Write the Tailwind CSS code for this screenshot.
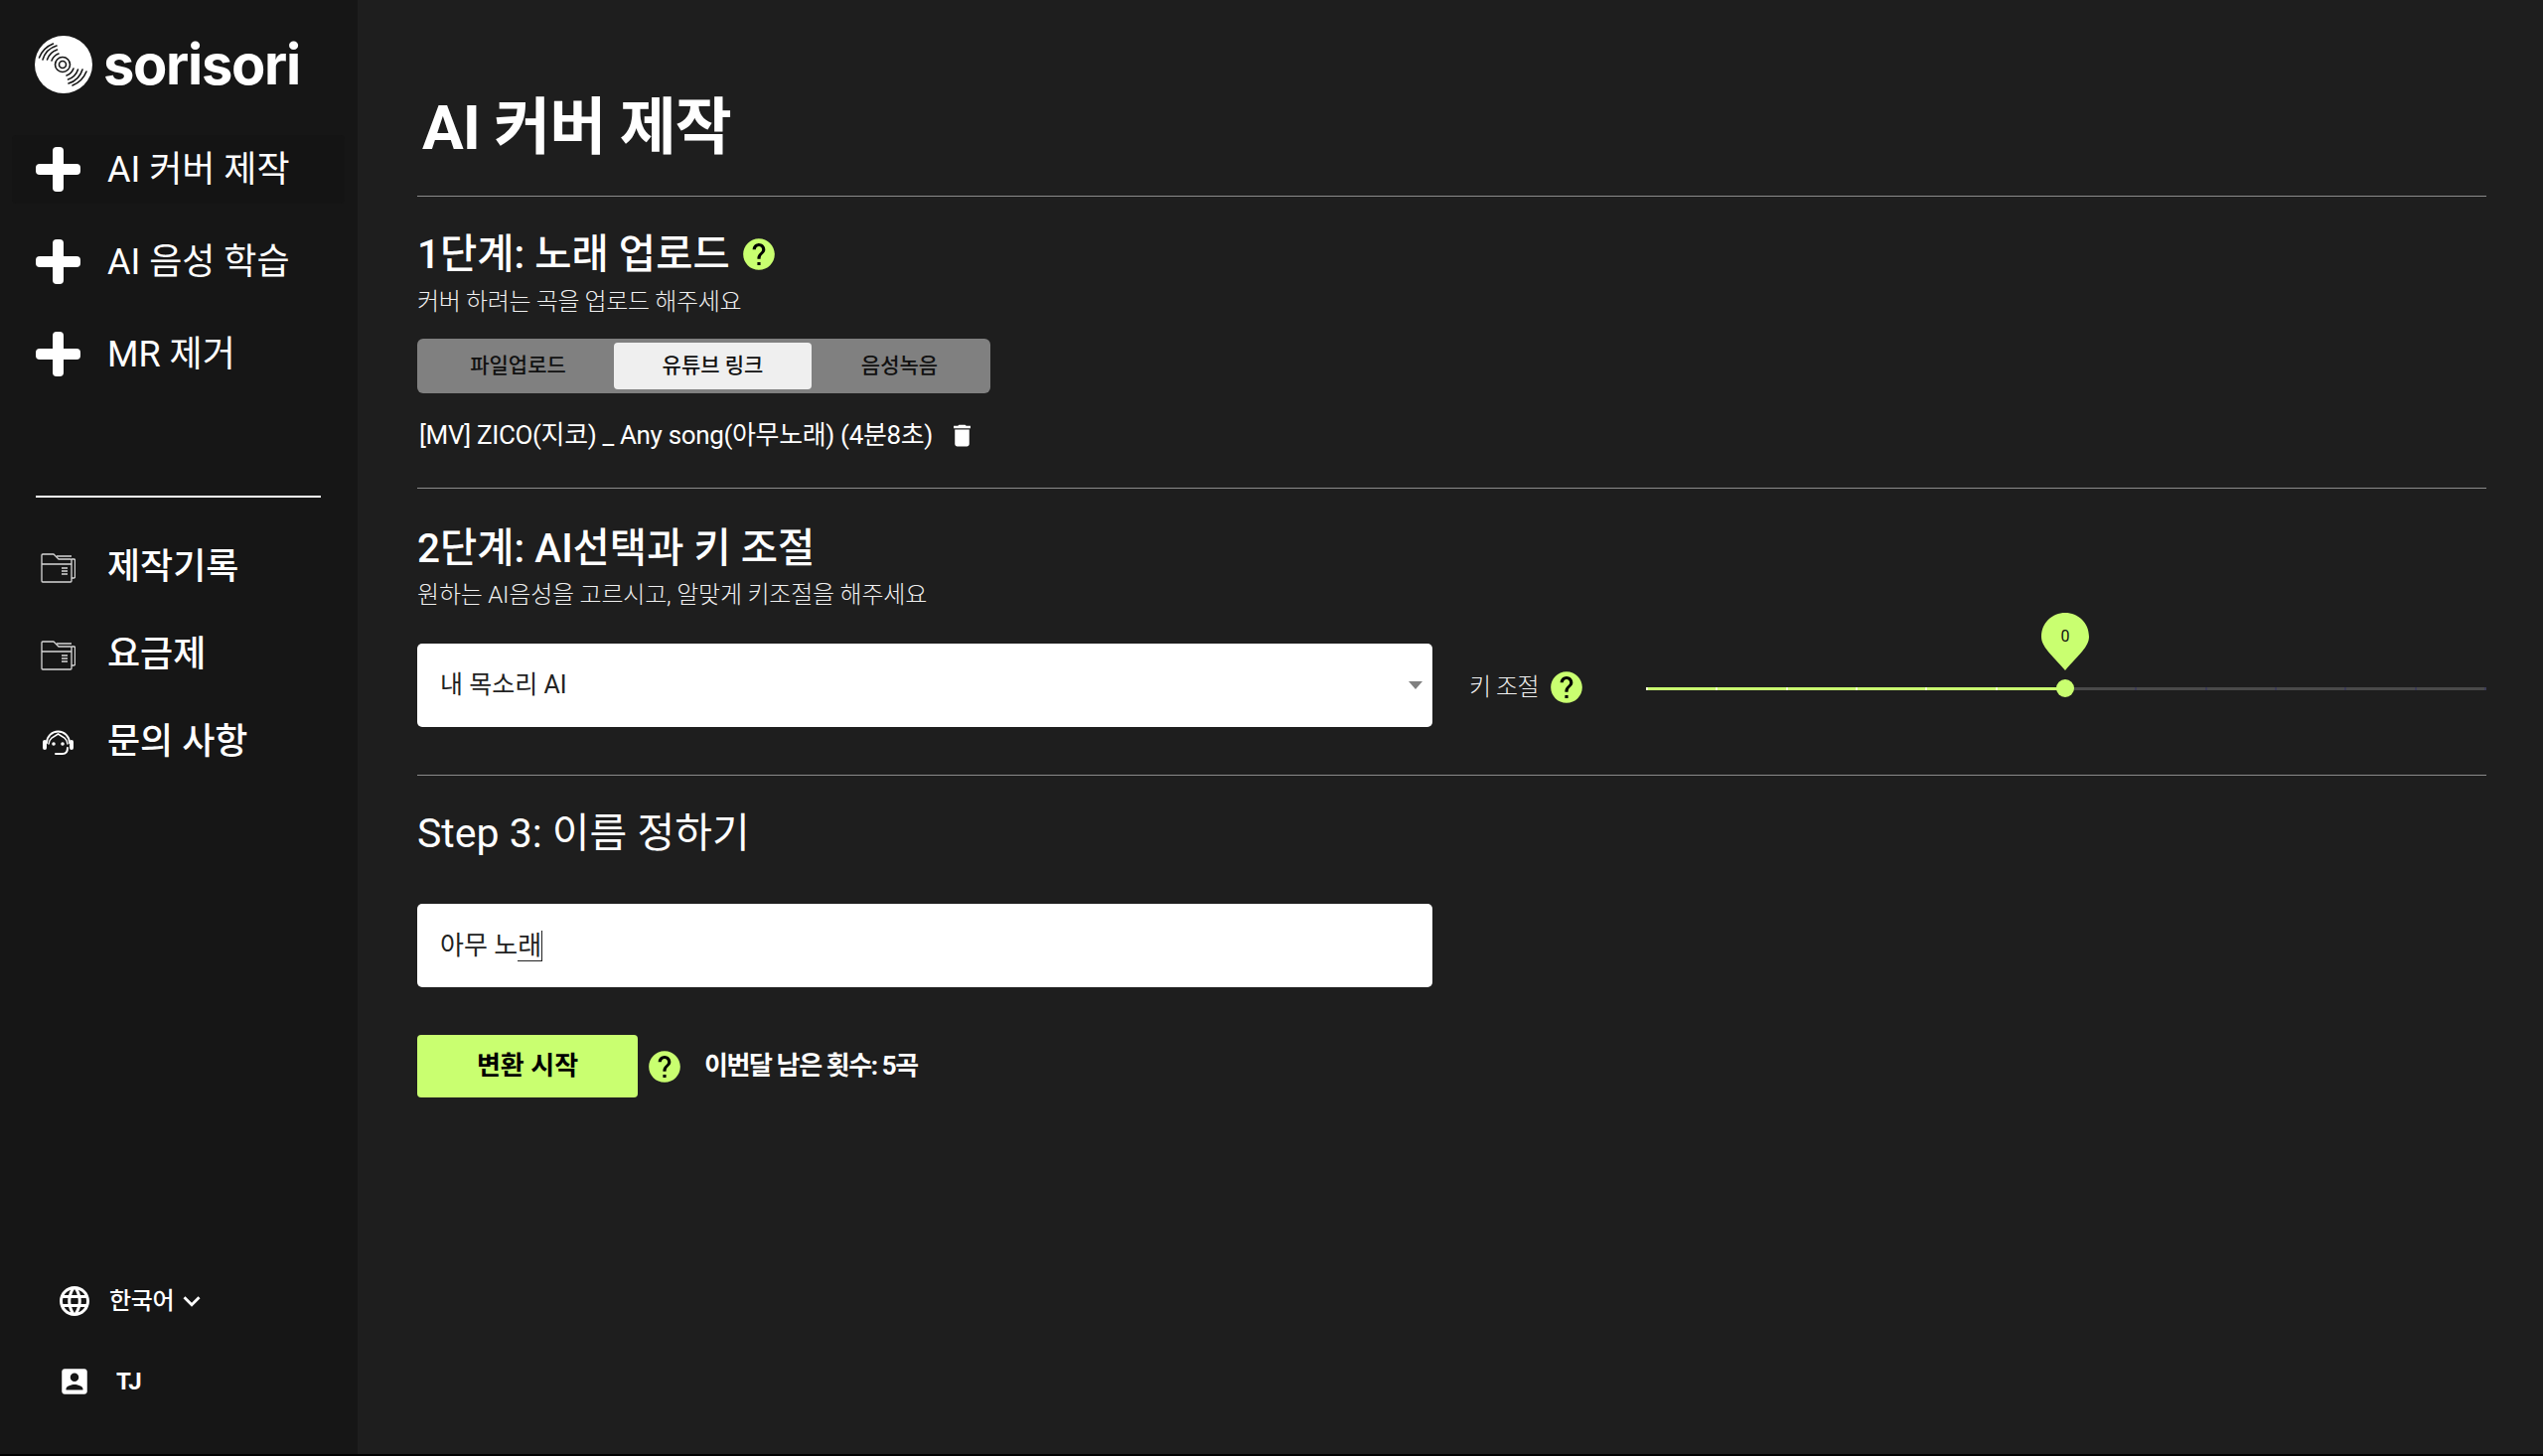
<!DOCTYPE html>
<html lang="ko">
<head>
  <meta charset="UTF-8" />
  <meta name="viewport" content="width=device-width, initial-scale=1.0" />
  <title>sorisori</title>
  <script src="https://cdn.jsdelivr.net/npm/@tailwindcss/browser@4"></script>
</head>
<body class="bg-black text-white font-[Roboto,'Noto_Sans_CJK_KR',sans-serif] overflow-hidden">
  <div class="flex h-[1464px]">
    <!-- Sidebar -->
    <aside class="w-[360px] shrink-0 bg-[#161616] flex flex-col">
      <div class="flex items-center gap-[11px] pl-[35px] pt-[36px] h-[94px]">
        <svg class="w-[58px] h-[58px]" viewBox="0 0 58 58" fill="none">
          <circle cx="29" cy="29" r="29" fill="#fff" />
          <g stroke="#161616" stroke-width="1.600" stroke-linecap="round">
            <circle cx="28" cy="29" r="3.500" />
            <circle cx="28" cy="29" r="7.500" />
            <path d="M17 25a12 12 0 0 1 7-7M12.500 24a16 16 0 0 1 10-10M8 24a21 21 0 0 1 14-14M4.500 22a25 25 0 0 1 14-14" />
            <path d="M39 33a12 12 0 0 1-7 7M43.500 34a16 16 0 0 1-10 10M48 34a21 21 0 0 1-14 14M52 36a25 25 0 0 1-14 14" />
          </g>
        </svg>
        <span class="text-[56px] leading-none font-bold font-[Inter,sans-serif] tracking-[-1.300px]">sorisori</span>
      </div>

      <nav class="mt-[42px] pl-[12px] pr-[13px] flex flex-col">
        <a class="flex items-center h-[69px] bg-[#141414] rounded-[4px] pl-[24px] gap-[27px] text-[36px]">
          <svg class="w-[45px] h-[45px]" viewBox="0 0 45 45" fill="#fff"><rect x="17" width="11" height="45" rx="4" /><rect y="17" width="45" height="11" rx="4" /></svg>
          <span>AI 커버 제작</span>
        </a>
        <a class="flex items-center h-[69px] mt-[24px] pl-[24px] gap-[27px] text-[36px]">
          <svg class="w-[45px] h-[45px]" viewBox="0 0 45 45" fill="#fff"><rect x="17" width="11" height="45" rx="4" /><rect y="17" width="45" height="11" rx="4" /></svg>
          <span>AI 음성 학습</span>
        </a>
        <a class="flex items-center h-[69px] mt-[24px] pl-[24px] gap-[27px] text-[36px]">
          <svg class="w-[45px] h-[45px]" viewBox="0 0 45 45" fill="#fff"><rect x="17" width="11" height="45" rx="4" /><rect y="17" width="45" height="11" rx="4" /></svg>
          <span>MR 제거</span>
        </a>
      </nav>

      <div class="mt-[108px] mx-[36px] w-[287px] h-[2px] bg-white shrink-0"></div>

      <div class="mt-[40px] flex flex-col text-[36px] font-medium">
        <a class="flex items-center h-[60px] pl-[41px] gap-[32px]">
          <svg class="w-[35px] h-[32px]" viewBox="0 0 35 32" fill="none" stroke="#d8d8d8" stroke-width="1.300" stroke-linejoin="round">
            <path d="M2 31h28a1 1 0 0 0 1-1V9a1 1 0 0 0-1-1H18l-5-5H2a1 1 0 0 0-1 1v26a1 1 0 0 0 1 1z" />
            <path d="M1 13h30M16 5h15M31 8l3 0a1 1 0 0 1 .5 1v17a1 1 0 0 1-1 1h-2.500M21 17h6M21 20h6M21 23h6" />
          </svg>
          <span>제작기록</span>
        </a>
        <a class="flex items-center h-[60px] mt-[28px] pl-[41px] gap-[32px]">
          <svg class="w-[35px] h-[32px]" viewBox="0 0 35 32" fill="none" stroke="#d8d8d8" stroke-width="1.300" stroke-linejoin="round">
            <path d="M2 31h28a1 1 0 0 0 1-1V9a1 1 0 0 0-1-1H18l-5-5H2a1 1 0 0 0-1 1v26a1 1 0 0 0 1 1z" />
            <path d="M1 13h30M16 5h15M31 8l3 0a1 1 0 0 1 .5 1v17a1 1 0 0 1-1 1h-2.500M21 17h6M21 20h6M21 23h6" />
          </svg>
          <span>요금제</span>
        </a>
        <a class="flex items-center h-[60px] mt-[28px] pl-[43px] gap-[34px]">
          <svg class="w-[31px] h-[28px]" viewBox="0 0 31 28" fill="none" stroke="#fff" stroke-width="2" stroke-linecap="round">
            <path d="M4 15a11.500 11.500 0 0 1 23 0" />
            <path d="M6 16a9.500 9.500 0 0 1 3-6l6.500-4 6.500 4a9.500 9.500 0 0 1 3 6" stroke-width="1.500" />
            <path d="M25 20c0 5-2 6-5 6h-7" />
            <circle cx="11" cy="16" r=".8" />
            <circle cx="20" cy="16" r=".8" />
            <rect x="1" y="13" width="2" height="8" rx="1" fill="#fff" />
            <rect x="28" y="13" width="2" height="8" rx="1" fill="#fff" />
          </svg>
          <span>문의 사항</span>
        </a>
      </div>

      <div class="mt-auto pb-[57px] flex flex-col">
        <div class="flex items-center h-[32px] pl-[57px]">
          <svg class="w-[36px] h-[36px]" viewBox="0 0 24 24" fill="#fff"><path d="M11.990 2C6.470 2 2 6.480 2 12s4.470 10 9.990 10C17.520 22 22 17.520 22 12S17.520 2 11.990 2zm6.930 6h-2.950c-.320-1.250-.780-2.450-1.380-3.560 1.840.630 3.370 1.910 4.330 3.560zM12 4.040c.830 1.200 1.480 2.530 1.910 3.960h-3.820c.430-1.430 1.080-2.760 1.910-3.960zM4.260 14C4.100 13.360 4 12.690 4 12s.100-1.360.260-2h3.380c-.080.660-.140 1.320-.140 2 0 .680.060 1.340.140 2H4.260zm.820 2h2.950c.320 1.250.780 2.450 1.380 3.560-1.840-.630-3.370-1.900-4.330-3.560zm2.950-8H5.080c.960-1.660 2.490-2.930 4.330-3.560C8.810 5.550 8.350 6.750 8.030 8zM12 19.960c-.830-1.200-1.480-2.530-1.910-3.960h3.820c-.430 1.430-1.080 2.760-1.910 3.960zM14.340 14H9.660c-.090-.660-.160-1.320-.160-2 0-.680.070-1.350.160-2h4.680c.090.650.160 1.320.160 2 0 .680-.070 1.340-.160 2zm.250 5.560c.600-1.110 1.060-2.310 1.380-3.560h2.950c-.960 1.650-2.490 2.930-4.330 3.560zM16.360 14c.080-.660.140-1.320.140-2 0-.680-.060-1.340-.140-2h3.380c.160.640.260 1.310.260 2s-.100 1.360-.260 2h-3.380z" /></svg>
          <span class="ml-[17px] text-[24px] font-medium tracking-[-0.3px]">한국어</span>
          <svg class="w-[34px] h-[34px] ml-[1px]" viewBox="0 0 24 24" fill="#fff"><path d="M7.410 8.590 12 13.170l4.590-4.580L18 10l-6 6-6-6z" /></svg>
        </div>
        <div class="flex items-center h-[32px] mt-[49px] pl-[58px]">
          <svg class="w-[34px] h-[34px]" viewBox="0 0 24 24" fill="#fff"><path d="M19 3H5c-1.110 0-2 .900-2 2v14c0 1.100.890 2 2 2h14c1.100 0 2-.900 2-2V5c0-1.100-.900-2-2-2zm-7 3c1.650 0 3 1.350 3 3s-1.350 3-3 3-3-1.350-3-3 1.350-3 3-3zm6 12H6v-.750c0-2 4-3.100 6-3.100s6 1.100 6 3.100V18z" /></svg>
          <span class="ml-[25px] text-[24px] font-bold">TJ</span>
        </div>
      </div>
    </aside>

    <!-- Main -->
    <main class="flex-1 bg-[#1e1e1e] pl-[60px] pr-[60px]">
      <h1 class="mt-[87px] ml-[5px] text-[62px] leading-[84px] font-bold tracking-[-1px]">AI 커버 제작</h1>
      <div class="mt-[26px] h-px bg-[#8a8a8a]"></div>

      <!-- Step 1 -->
      <div class="mt-[33px] flex items-center gap-[10px]">
        <h2 class="text-[40.500px] leading-[50px] font-medium">1단계: 노래 업로드</h2>
        <svg class="w-[38px] h-[38px]" viewBox="0 0 24 24"><circle cx="12" cy="12" r="7" fill="#000" /><path fill="#c9ff70" d="M12 2C6.480 2 2 6.480 2 12s4.480 10 10 10 10-4.480 10-10S17.520 2 12 2zm1 17h-2v-2h2v2zm2.070-7.750-.900.920C13.450 12.900 13 13.500 13 15h-2v-.500c0-1.100.450-2.100 1.170-2.830l1.240-1.260c.370-.360.590-.860.590-1.410 0-1.100-.900-2-2-2s-2 .900-2 2H8c0-2.210 1.790-4 4-4s4 1.790 4 4c0 .880-.360 1.680-.930 2.250z" /></svg>
      </div>
      <p class="mt-[7px] text-[24px] leading-[32px] tracking-[-0.350px] text-[#f0f0f0] font-light">커버 하려는 곡을 업로드 해주세요</p>
      <div class="mt-[21px] w-[577px] h-[55px] bg-[#808080] rounded-[6px] flex items-center text-[21px] text-[#111] font-medium">
        <div class="w-[203px] text-center">파일업로드</div>
        <div class="w-[199px] h-[47px] bg-[#efefef] rounded-[4px] flex items-center justify-center ml-[-5px]">유튜브 링크</div>
        <div class="flex-1 text-center pr-[3px]">음성녹음</div>
      </div>
      <div class="mt-[24px] flex items-center h-[36px] pl-[2px]">
        <span class="text-[26px] tracking-[-0.350px]">[MV] ZICO(지코) _ Any song(아무노래) (4분8초)</span>
        <svg class="w-[29px] h-[29px] ml-[15px]" viewBox="0 0 24 24" fill="#fff"><path d="M6 19c0 1.100.900 2 2 2h8c1.100 0 2-.900 2-2V7H6v12zM19 4h-3.500l-1-1h-5l-1 1H5v2h14V4z" /></svg>
      </div>
      <div class="mt-[35px] h-px bg-[#8a8a8a]"></div>

      <!-- Step 2 -->
      <h2 class="mt-[35px] text-[40.500px] leading-[50px] font-medium">2단계: AI선택과 키 조절</h2>
      <p class="mt-[6px] text-[24px] leading-[32px] tracking-[-0.200px] text-[#f0f0f0] font-light">원하는 AI음성을 고르시고, 알맞게 키조절을 해주세요</p>
      <div class="mt-[33px] flex items-center">
        <div class="w-[1022px] shrink-0 h-[84px] bg-white rounded-[5px] flex items-center justify-between pl-[23px] pr-[10px] text-[25px] text-[#222]">
          <span>내 목소리 AI</span>
          <div class="w-0 h-0 border-x-[7px] border-x-transparent border-t-[8px] border-t-[#808080]"></div>
        </div>
        <span class="ml-[37px] mt-[3px] text-[24px] text-[#f0f0f0] whitespace-nowrap tracking-[-0.500px] font-light">키 조절</span>
        <svg class="w-[38px] h-[38px] ml-[9px] shrink-0 mt-[3px]" viewBox="0 0 24 24"><circle cx="12" cy="12" r="7" fill="#000" /><path fill="#c9ff70" d="M12 2C6.480 2 2 6.480 2 12s4.480 10 10 10 10-4.480 10-10S17.520 2 12 2zm1 17h-2v-2h2v2zm2.070-7.750-.900.920C13.450 12.900 13 13.500 13 15h-2v-.500c0-1.100.450-2.100 1.170-2.830l1.240-1.260c.370-.360.590-.860.590-1.410 0-1.100-.900-2-2-2s-2 .900-2 2H8c0-2.210 1.790-4 4-4s4 1.790 4 4c0 .880-.360 1.680-.930 2.250z" /></svg>
        <!-- Key slider -->
        <div class="relative ml-[61px] mt-[6px] w-[846px] shrink-0 h-[3px] flex">
          <div class="w-1/2 bg-[#c9ff70]"></div>
          <div class="w-1/2 bg-[#4a4a4a]"></div>
          <div class="absolute inset-0 flex justify-between">
            <i class="w-[2px] bg-[#efffd0]"></i><i class="w-[2px] bg-[#efffd0]"></i><i class="w-[2px] bg-[#efffd0]"></i><i class="w-[2px] bg-[#efffd0]"></i><i class="w-[2px] bg-[#efffd0]"></i><i class="w-[2px] bg-[#efffd0]"></i><i class="w-[2px] bg-transparent"></i><i class="w-[2px] bg-[#3c3c58]"></i><i class="w-[2px] bg-[#3c3c58]"></i><i class="w-[2px] bg-[#3c3c58]"></i><i class="w-[2px] bg-[#3c3c58]"></i><i class="w-[2px] bg-[#3c3c58]"></i><i class="w-[2px] bg-[#3c3c58]"></i>
          </div>
          <div class="absolute left-[413px] top-[-8px] w-[18px] h-[18px] rounded-full bg-[#c9ff70]"></div>
          <svg class="absolute left-[398px] top-[-75px] w-[48px] h-[58px]" viewBox="0 0 48 58" fill="#c9ff70"><path d="M24 0C37 0 48 10 48 24 48 34 38 42 24 58 10 42 0 34 0 24 0 10 11 0 24 0z" /></svg>
          <span class="absolute left-[398px] top-[-74px] w-[48px] text-center text-[16px] leading-[46px] text-[#111]">0</span>
        </div>
      </div>
      <div class="mt-[48px] h-px bg-[#8a8a8a]"></div>

      <!-- Step 3 -->
      <h2 class="mt-[30px] text-[41px] leading-[56px]">Step 3: 이름 정하기</h2>
      <div class="mt-[43px] w-[1022px] h-[84px] bg-white rounded-[5px] flex items-center pl-[23px] text-[26px] text-[#222]">
        <span>아무 노</span><span class="border-b-[1.500px] border-r-[1.500px] border-[#222] leading-[30px]">래</span>
      </div>
      <div class="mt-[48px] flex items-center">
        <button class="w-[222px] h-[63px] bg-[#c9ff70] rounded-[4px] text-[26px] font-bold text-black">변환 시작</button>
        <svg class="w-[38px] h-[38px] ml-[8px]" viewBox="0 0 24 24"><circle cx="12" cy="12" r="7" fill="#000" /><path fill="#c9ff70" d="M12 2C6.480 2 2 6.480 2 12s4.480 10 10 10 10-4.480 10-10S17.520 2 12 2zm1 17h-2v-2h2v2zm2.070-7.750-.900.920C13.450 12.900 13 13.500 13 15h-2v-.500c0-1.100.450-2.100 1.170-2.830l1.240-1.260c.370-.360.590-.860.590-1.410 0-1.100-.900-2-2-2s-2 .900-2 2H8c0-2.210 1.790-4 4-4s4 1.790 4 4c0 .880-.360 1.680-.930 2.250z" /></svg>
        <span class="ml-[21px] text-[26px] font-bold tracking-[-1.400px]">이번달 남은 횟수: 5곡</span>
      </div>
    </main>
  </div>
</body>
</html>
